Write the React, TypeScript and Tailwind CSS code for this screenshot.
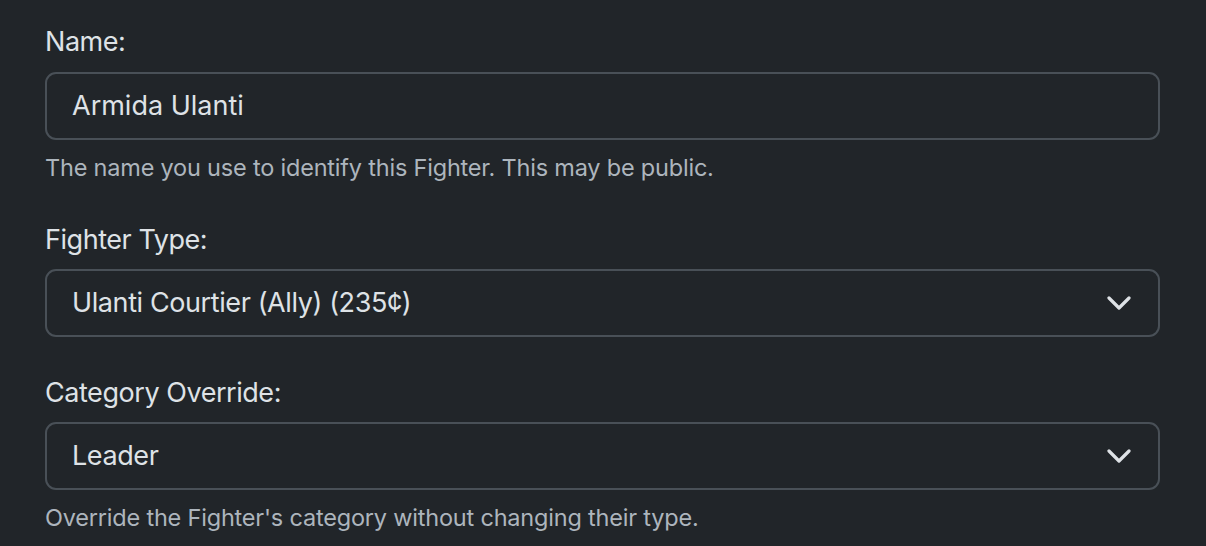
function FieldLabel({ children }: { children: React.ReactNode }) {
  return (
    <div className="text-[27px] leading-[40px] tracking-[-0.45px] text-[#dee2e6]">{children}</div>
  );
}

function HelpText({ children }: { children: React.ReactNode }) {
  return (
    <div className="mt-[10px] text-[23.5px] leading-[35px] tracking-[-0.2px] text-[#adb5bd]">
      {children}
    </div>
  );
}

function TextBox({ value }: { value: string }) {
  return (
    <div className="mt-[10px] flex h-[68px] items-center rounded-[11px] border-2 border-[#495057] pl-[25px] text-[27px] text-[#dee2e6]">
      {value}
    </div>
  );
}

function SelectBox({ value }: { value: string }) {
  return (
    <div className="mt-[9px] flex h-[68px] items-center justify-between rounded-[11px] border-2 border-[#495057] pl-[25px] pr-[27px] text-[27px] tracking-[-0.4px] text-[#dee2e6]">
      <span>{value}</span>
      <svg width="24" height="14" viewBox="0 0 24 14" fill="none">
        <path d="M2 2l10 10 10-10" stroke="#dee2e6" strokeWidth="3.2" strokeLinecap="round" strokeLinejoin="round" />
      </svg>
    </div>
  );
}

export default function App() {
  return (
    <div
      className="h-[546px] w-[1206px] overflow-hidden bg-[#212529] pl-[45px] pr-[46px] pt-[22px]"
      style={{ fontFamily: 'Inter, "Noto Sans", sans-serif' }}
    >
      <div>
        <FieldLabel>Name:</FieldLabel>
        <TextBox value="Armida Ulanti" />
        <HelpText>The name you use to identify this Fighter. This may be public.</HelpText>
      </div>

      <div className="mt-[35px]">
        <FieldLabel>Fighter Type:</FieldLabel>
        <SelectBox value="Ulanti Courtier (Ally) (235¢)" />
      </div>

      <div className="mt-[36px]">
        <FieldLabel>Category Override:</FieldLabel>
        <SelectBox value="Leader" />
        <HelpText>Override the Fighter's category without changing their type.</HelpText>
      </div>
    </div>
  );
}
